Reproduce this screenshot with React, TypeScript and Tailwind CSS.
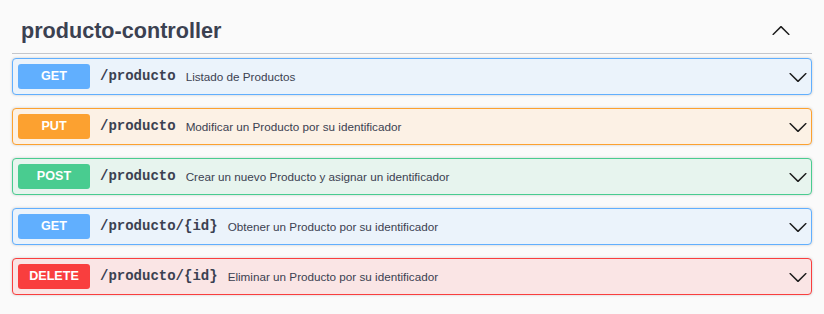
const ops = [
  { method: 'GET', path: '/producto', desc: 'Listado de Productos', badge: 'bg-[#61affe]', block: 'bg-[#ebf3fb] border-[#61affe]' },
  { method: 'PUT', path: '/producto', desc: 'Modificar un Producto por su identificador', badge: 'bg-[#fca130]', block: 'bg-[#fcf1e5] border-[#fca130]' },
  { method: 'POST', path: '/producto', desc: 'Crear un nuevo Producto y asignar un identificador', badge: 'bg-[#49cc90]', block: 'bg-[#e7f4ee] border-[#49cc90]' },
  { method: 'GET', path: '/producto/{id}', desc: 'Obtener un Producto por su identificador', badge: 'bg-[#61affe]', block: 'bg-[#ebf3fb] border-[#61affe]' },
  { method: 'DELETE', path: '/producto/{id}', desc: 'Eliminar un Producto por su identificador', badge: 'bg-[#f93e3e]', block: 'bg-[#fae5e5] border-[#f93e3e]' },
];

function Arrow({ up = false }: { up?: boolean }) {
  return (
    <svg width="20" height="20" viewBox="0 0 20 20" className={up ? 'rotate-180' : ''}>
      <path
        fill="#1b1b1b"
        d="M17.418 6.109c.272-.268.709-.268.979 0s.271.701 0 .969l-7.908 7.83c-.27.268-.707.268-.979 0l-7.908-7.83c-.27-.268-.27-.701 0-.969.271-.268.709-.268.979 0L10 13.25l7.418-7.141z"
      />
    </svg>
  );
}

export default function App() {
  return (
    <div className="w-[824px] h-[314px] bg-[#fafafa] px-3 font-['Liberation_Sans',Arial,sans-serif] text-[#3b4151]">
      {/* Tag header */}
      <div className="flex items-center justify-between border-b border-[#c4c6cb] pt-[19px] pb-[10px] pl-[9px] pr-[21px]">
        <h3 className="text-[21.6px] leading-[24px] font-bold">producto-controller</h3>
        <Arrow up />
      </div>

      {/* Operations */}
      <div className="mt-[4px] flex flex-col gap-[13px]">
        {ops.map((op, i) => (
          <div
            key={i}
            className={`flex items-center border rounded-[4px] p-[5px] shadow-[0_0_3px_rgba(0,0,0,0.19)] ${op.block}`}
          >
            <span
              className={`w-[72px] h-[25px] flex items-center justify-center rounded-[3px] text-white text-[12.6px] font-bold ${op.badge}`}
            >
              {op.method}
            </span>
            <span className="ml-[10px] font-['Liberation_Mono','Courier_New',monospace] font-bold text-[14px]">
              {op.path}
            </span>
            <span className="ml-[10px] text-[11.7px]">{op.desc}</span>
            <span className="ml-auto -mr-[2px] flex">
              <Arrow />
            </span>
          </div>
        ))}
      </div>
    </div>
  );
}
